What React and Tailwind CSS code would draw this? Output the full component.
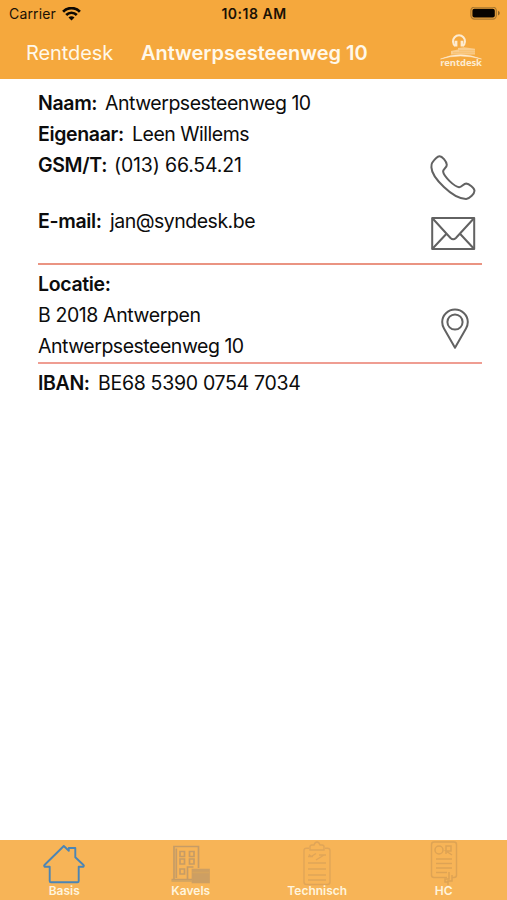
import React from "react";

function Row({ label, value, labelClass = "", valueClass = "tracking-[-0.48px]" }) {
  return (
    <div className="flex h-[31px] items-center whitespace-pre">
      {label && <span className={`font-semibold tracking-[-0.35px] ${labelClass}`}>{label}</span>}
      {value && <span className={valueClass}>{value}</span>}
    </div>
  );
}

function Wifi() {
  return (
    <svg className="ml-[6px] h-[14px] w-[19px]" viewBox="0 0 19 14" fill="none" stroke="#0d0903" strokeWidth="2.7">
      <path d="M1.1 4.7 C5.8 -.1 13.2 -.1 17.9 4.7" />
      <path d="M4.2 8 C7.2 5 11.8 5 14.8 8" />
      <path d="M9.5 13.5 L6.5 10.4 C8.2 8.9 10.8 8.9 12.5 10.4 Z" fill="#0d0903" stroke="none" />
    </svg>
  );
}

function Battery() {
  return (
    <svg className="h-[14px] w-[31px]" viewBox="0 0 31 14">
      <rect x=".9" y=".1" width="25.4" height="12" rx="3.6" fill="none" stroke="#a87830" strokeWidth="1.2" />
      <rect x="2.4" y="1.7" width="22.4" height="8.8" rx="2" fill="#080501" />
      <path d="M28 3.8 Q29.8 4.5 29.8 6.1 Q29.8 7.7 28 8.4 Z" fill="#8d6426" />
    </svg>
  );
}

function Logo() {
  return (
    <div className="flex w-[42px] flex-col items-center text-[#fdebd0]">
      <svg className="h-[27px] w-[42px]" viewBox="0 0 42 27" fill="none" stroke="currentColor">
        <path d="M15.2 13 A6 6 0 1 1 22.8 13" strokeWidth="2" />
        <path d="M16 7.8 V13.4 M22 7.8 V13.4" strokeWidth="2.8" />
        <path d="M11 21.5 V18 L18 16.5 V15 L24 14.2 L35 15.8 V21.5 Z" fill="currentColor" stroke="none" opacity=".55" />
        <path d="M19 17.8 H35 M13 19.8 H35" stroke="#f5a83d" strokeWidth=".4" />
        <path d="M.5 26 Q20 17.5 41.5 26 Q20 20 .5 26 Z" fill="currentColor" strokeWidth=".5" />
      </svg>
      <span className="-mt-px font-['Open_Sans','Inter',sans-serif] text-[9.5px] leading-[8px] font-bold tracking-[-0.1px]">rentdesk</span>
    </div>
  );
}

function Phone() {
  return (
    <svg className="h-[46px] w-[46px]" viewBox="0 0 46 46" fill="none" stroke="#626262" strokeWidth="2" strokeLinejoin="round">
      <path d="M2.2 7.8 C4.6 4.2 7 1.5 9.5 1.2 C12 1 16.6 6.5 16.8 9.7 C17 12.6 12.9 13.8 13.1 16.7 C13.8 21.5 24.5 31.8 29 32.2 C32 32.5 33.4 28.5 36.2 28.5 C39 28.6 44.6 33.2 44.5 35.8 C44.4 38.8 40 43.4 36.2 43.9 C22.8 44.2 1.8 22.5 1.4 12.4 C1.3 10.3 1.4 9 2.2 7.8 Z" />
    </svg>
  );
}

function Mail() {
  return (
    <svg className="h-[34px] w-[45px]" viewBox="0 0 45 34" fill="none" stroke="#626262" strokeWidth="2" strokeLinejoin="round">
      <rect x="1.2" y="1" width="42" height="31" />
      <path d="M1.2 1 L19.5 21 Q22.2 23.6 24.9 21 L43.2 1 M1.2 32 L15.5 16.8 M43.2 32 L29 16.8" />
    </svg>
  );
}

function Pin() {
  return (
    <svg className="h-[42px] w-[28px]" viewBox="0 0 28 42" fill="none" stroke="#626262" strokeWidth="2" strokeLinejoin="round">
      <path d="M14 39.8 L3 20.5 C1.6 18 1.2 16 1.2 14 A12.8 12.5 0 0 1 26.8 14 C26.8 16 26.4 18 25 20.5 Z" />
      <circle cx="14" cy="14" r="7.6" />
    </svg>
  );
}

function HomeIcon() {
  return (
    <svg className="h-[48px] w-[44px]" viewBox="0 0 44 48" fill="none" stroke="#4b85b5" strokeWidth="1.9" strokeLinejoin="round">
      <path d="M7.7 26.7 H2.5 Q1.7 25.8 2.5 25 L21.8 6 L26.8 10.8 V8 H33.3 V17.2 L41.5 25 Q42.3 25.8 41.5 26.7 H36.7 V41 Q36.7 42.3 35.4 42.3 H9 Q7.7 42.3 7.7 41 Z" />
    </svg>
  );
}

function BuildingIcon() {
  return (
    <svg className="h-[48px] w-[40px]" viewBox="1 0 40 48" fill="none" stroke="#c69c66" strokeWidth="1.7">
      <path d="M4 39.5 V6.5 H28.5 V28 M1.5 39.7 H22 M6.3 38 V8.5" />
      <path d="M10 11.5 h4.5 v5 h-4.5z M19.5 11.5 h4.5 v5 h-4.5z M10 19 h4.5 v5 h-4.5z M19.5 19 h4.5 v5 h-4.5z M10 29 h4.5 v5 h-4.5z M17.5 39 V27 h6" />
      <path d="M22.5 29.5 H39 V42.5 H22.5 Z" fill="#c69c66" opacity=".85" />
      <path d="M22.5 32.5 H39" stroke="#d6a45d" />
      <path d="M1.5 41 H22" stroke="#d3a562" />
    </svg>
  );
}

function ClipboardIcon() {
  return (
    <svg className="h-[48px] w-[30px]" viewBox="0 0 30 48" fill="none" stroke="#e0a558" strokeWidth="1.4">
      <path d="M7 8.2 H4.5 Q2 8.2 2 10.7 V42 Q2 44.5 4.5 44.5 H25.5 Q28 44.5 28 42 V10.7 Q28 8.2 25.5 8.2 H23" />
      <path d="M8 10 V6.8 Q8 5 10 5 H12 Q13 2 15 2 Q17 2 18 5 H20 Q22 5 22 6.8 V10 Z" />
      <path d="M6 16.5 H11 M7 14.5 l2 2 l5 -3 M17 15 H24 M6 23 H24 M14 20 L22 15 M6 29 H24 M6 35 H24 M6 40 H24" />
    </svg>
  );
}

function DocumentIcon() {
  return (
    <svg className="h-[48px] w-[28px]" viewBox="0 0 28 48" fill="none" stroke="#dea354" strokeWidth="1.5">
      <path d="M17 37.5 H4 Q1.5 37.5 1.5 35 V4.5 Q1.5 2 4 2 H24 Q26.5 2 26.5 4.5 V35 Q26.5 37.5 24 37.5 H22" />
      <circle cx="9" cy="10" r="4" />
      <path d="M16 14 V6 H21 V11 H16 L22 15 M6 19 H22 M6 23.5 H22 M6 28 H22 M6 32.5 H17 M19 32 V39 H15 V42 H18 M22 35 V41 H18 V45" />
    </svg>
  );
}

function Tab({ icon, label }) {
  return (
    <div className="flex w-[126.5px] flex-col items-center">
      {icon}
      <span className="-mt-[4px] text-[12px] leading-[14px] font-semibold text-[#fff4dd]">{label}</span>
    </div>
  );
}

export default function App() {
  return (
    <div className="flex h-[900px] w-[507px] flex-col overflow-hidden bg-white font-['Inter','Liberation_Sans',sans-serif] text-[19.5px] text-[#0c0c0c]">
      <header className="h-[79px] shrink-0 bg-[#f5a83d]">
        <div className="grid h-[27px] grid-cols-3 items-center pr-[6px] pl-[9px] text-[14px] text-[#1a1105]">
          <div className="flex items-center">
            <span className="tracking-[0.15px]">Carrier</span>
            <Wifi />
          </div>
          <span className="pr-[2px] text-center font-semibold tracking-[0.5px] whitespace-nowrap">10:18 AM</span>
          <div className="flex justify-end">
            <Battery />
          </div>
        </div>
        <div className="flex h-[52px] items-start pl-[26px] text-[20px] leading-[52px] text-[#fff8ea]">
          <span className="w-[115px] tracking-[-0.1px] whitespace-nowrap">Rentdesk</span>
          <span className="w-[299px] font-semibold tracking-[-0.03px] whitespace-nowrap">Antwerpsesteenweg 10</span>
          <div className="pt-[6px]">
            <Logo />
          </div>
        </div>
      </header>

      <main className="flex grow flex-col pt-[9px] pr-[25px] pl-[38px]">
        <section className="flex h-[175px] justify-between">
          <div>
            <Row label="Naam:" value="Antwerpsesteenweg 10" labelClass="w-[67px]" />
            <Row label="Eigenaar:" value="Leen Willems" labelClass="w-[94px]" />
            <Row label="GSM/T:" value="(013) 66.54.21" labelClass="w-[76px]" valueClass="tracking-[-0.17px]" />
            <div className="h-[25px]" />
            <Row label="E-mail:" value="jan@syndesk.be" labelClass="w-[72px]" valueClass="tracking-[-0.5px]" />
          </div>
          <div className="flex flex-col items-center gap-[16px] pt-[67px] pr-[6px]">
            <Phone />
            <Mail />
          </div>
        </section>
        <div className="h-[2px] bg-[#ea9482]" />
        <section className="flex h-[97px] justify-between pt-[4px]">
          <div>
            <Row label="Locatie:" />
            <Row value="B 2018 Antwerpen" valueClass="tracking-[-0.4px]" />
            <Row value="Antwerpsesteenweg 10" />
          </div>
          <div className="pt-[39px] pr-[13px]">
            <Pin />
          </div>
        </section>
        <div className="h-[2px] bg-[#ef9d92]" />
        <section className="pt-[4px]">
          <Row label="IBAN:" value="BE68 5390 0754 7034" labelClass="w-[60px]" valueClass="tracking-[-0.3px]" />
        </section>
      </main>

      <nav className="flex h-[60px] shrink-0 bg-[#f7b457] pl-px">
        <Tab icon={<HomeIcon />} label="Basis" />
        <Tab icon={<BuildingIcon />} label="Kavels" />
        <Tab icon={<ClipboardIcon />} label="Technisch" />
        <Tab icon={<DocumentIcon />} label="HC" />
      </nav>
    </div>
  );
}
